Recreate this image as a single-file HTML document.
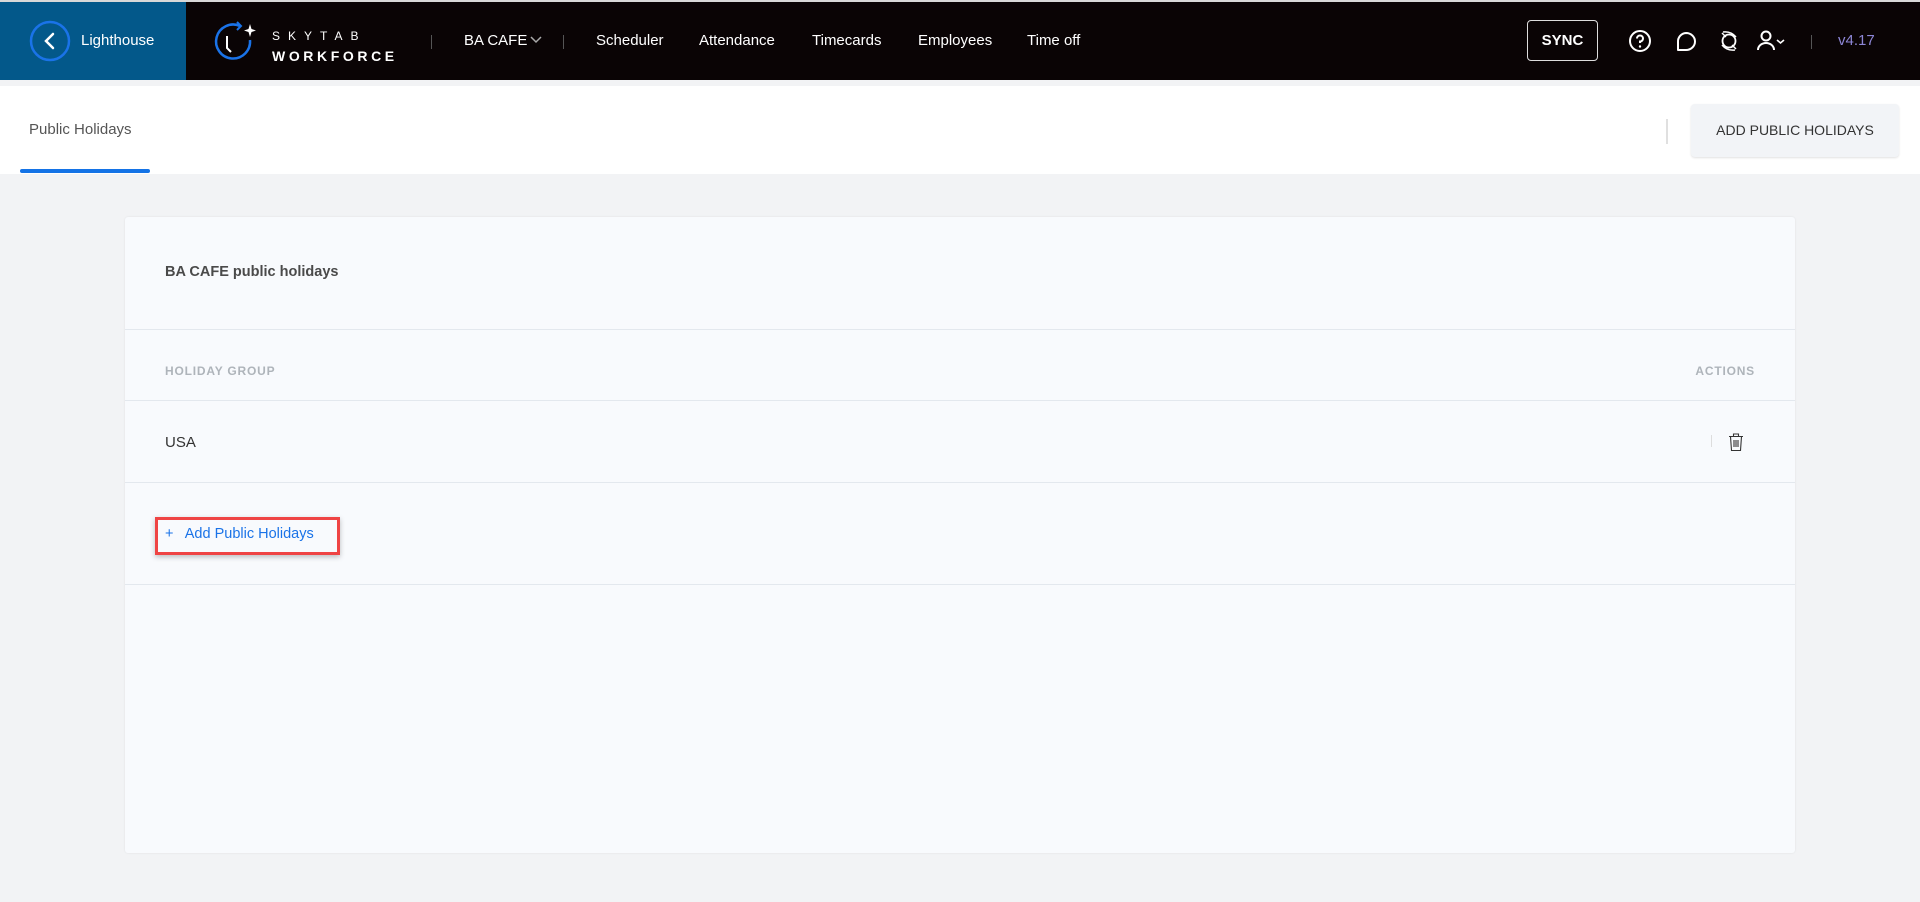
<!DOCTYPE html>
<html><head><meta charset="utf-8"><style>
*{box-sizing:border-box;margin:0;padding:0}
body{width:1920px;height:902px;background:#f2f3f5;font-family:"Liberation Sans",sans-serif;position:relative;overflow:hidden}
.hdr{position:absolute;left:0;top:0;width:1920px;height:80px;background:#0a0405;border-top:2px solid #d8d8d8}
.lh{position:absolute;left:0;top:0;width:186px;height:78px;background:#03588a}
.t{position:absolute;white-space:nowrap}
.nav{color:#fff;font-size:15px;top:30px}
.sep{position:absolute;width:1px;height:14px;background:#555;top:33px}
.sub{position:absolute;left:0;top:86px;width:1920px;height:88px;background:#fff}
.card{position:absolute;left:125px;top:217px;width:1670px;height:636px;background:#f8fafd;border-radius:3px;box-shadow:0 0 2px rgba(0,0,0,.08)}
.line{position:absolute;left:0;width:1670px;height:1px;background:#e3e8ee}
</style></head><body>
<div class="hdr">
 <div class="lh"></div>
 <svg style="position:absolute;left:29px;top:18px" width="42" height="42"><circle cx="21" cy="21" r="19" fill="none" stroke="#1a73e8" stroke-width="2.5"/><path d="M24 14 L17 21 L24 28" fill="none" stroke="#fff" stroke-width="2.5" stroke-linecap="round"/></svg>
 <div class="t nav" style="left:81px">Lighthouse</div>
 <svg style="position:absolute;left:210px;top:16px" width="50" height="50"><path d="M30 8 A17 17 0 1 0 40 22" fill="none" stroke="#1a73e8" stroke-width="2.5"/><path d="M27 4 L31 8 L27 12" fill="none" stroke="#1a73e8" stroke-width="2"/><path d="M17 18 V30 L21 34" fill="none" stroke="#fff" stroke-width="2"/><path d="M40 6 L41.5 11 L46 12.5 L41.5 14 L40 19 L38.5 14 L34 12.5 L38.5 11Z" fill="#fff"/></svg>
 <div class="t" style="left:272px;top:27px;color:#fff;font-size:12px;letter-spacing:8px">SKYTAB</div>
 <div class="t" style="left:272px;top:46px;color:#fff;font-size:14px;font-weight:bold;letter-spacing:3.6px">WORKFORCE</div>
 <div class="sep" style="left:431px"></div>
 <div class="t nav" style="left:464px">BA CAFE</div>
 <svg style="position:absolute;left:530px;top:34px" width="12" height="8"><path d="M1 1 L6 6 L11 1" fill="none" stroke="#aaa" stroke-width="1.5"/></svg>
 <div class="sep" style="left:563px"></div>
 <div class="t nav" style="left:596px">Scheduler</div>
 <div class="t nav" style="left:699px">Attendance</div>
 <div class="t nav" style="left:812px">Timecards</div>
 <div class="t nav" style="left:918px">Employees</div>
 <div class="t nav" style="left:1027px">Time off</div>
 <div style="position:absolute;left:1527px;top:18px;width:71px;height:41px;border:1px solid #ddd;border-radius:4px;color:#fff;font-size:15px;font-weight:bold;text-align:center;line-height:39px">SYNC</div>
 <svg style="position:absolute;left:1628px;top:27px" width="24" height="24"><circle cx="12" cy="12" r="10" fill="none" stroke="#fff" stroke-width="2"/><path d="M9 9.5 A3 3 0 1 1 12 12.5 V14" fill="none" stroke="#fff" stroke-width="2"/><circle cx="12" cy="17.5" r="1.2" fill="#fff"/></svg>
 <svg style="position:absolute;left:1674px;top:28px" width="24" height="24"><path d="M12 3 A9 8.5 0 0 1 21 11.5 A9 8.5 0 0 1 12 20 H4 V12 A8.5 8.5 0 0 1 12 3Z" fill="none" stroke="#fff" stroke-width="2" stroke-linejoin="round"/></svg>
 <svg style="position:absolute;left:1717px;top:27px" width="24" height="24"><circle cx="12" cy="12" r="6.5" fill="none" stroke="#fff" stroke-width="1.8"/><path d="M5 4 L9 8 M15 16 L19 20 M6 3 Q14 2 19 8 M5 16 Q10 22 18 21" fill="none" stroke="#fff" stroke-width="1.5"/></svg>
 <svg style="position:absolute;left:1756px;top:27px" width="36" height="24"><circle cx="10" cy="7" r="4.5" fill="none" stroke="#fff" stroke-width="2"/><path d="M2 21 A8 7 0 0 1 18 21" fill="none" stroke="#fff" stroke-width="2"/><path d="M21 11 L24.5 14 L28 11" fill="none" stroke="#fff" stroke-width="1.6"/></svg>
 <div class="sep" style="left:1811px"></div>
 <div class="t" style="left:1838px;top:30px;color:#8d86d6;font-size:15px">v4.17</div>
</div>
<div class="sub">
 <div class="t" style="left:29px;top:35px;color:#555;font-size:15px">Public Holidays</div>
 <div style="position:absolute;left:20px;top:83px;width:130px;height:4px;background:#1473e6;border-radius:2px"></div>
 <div style="position:absolute;left:1666px;top:33px;width:2px;height:25px;background:#e0e0e0"></div>
 <div style="position:absolute;left:1691px;top:18px;width:208px;height:53px;background:#f2f4f7;border-radius:4px;box-shadow:0 1px 2px rgba(0,0,0,.12);color:#333;font-size:14px;text-align:center;line-height:53px">ADD PUBLIC HOLIDAYS</div>
</div>
<div class="card">
 <div class="t" style="left:40px;top:47px;color:#4a4a4a;font-size:14.5px;font-weight:bold">BA CAFE public holidays</div>
 <div class="line" style="top:112px"></div>
 <div class="t" style="left:40px;top:147px;color:#aeb4ba;font-size:12px;font-weight:bold;letter-spacing:.8px">HOLIDAY GROUP</div>
 <div class="t" style="right:40px;top:147px;color:#aeb4ba;font-size:12px;font-weight:bold;letter-spacing:.8px">ACTIONS</div>
 <div class="line" style="top:183px"></div>
 <div class="t" style="left:40px;top:217px;color:#333;font-size:15px">USA</div>
 <div style="position:absolute;left:1586px;top:218px;width:1px;height:12px;background:#ddd"></div>
 <svg style="position:absolute;left:1602px;top:215px" width="18" height="20"><path d="M2 4.5 H16 M6.5 4.5 V2 H11.5 V4.5 M3.5 4.5 L4.5 18.5 H13.5 L14.5 4.5 M7 8 V15 M9 8 V15 M11 8 V15" fill="none" stroke="#333" stroke-width="1.1"/></svg>
 <div class="line" style="top:265px"></div>
 <div style="position:absolute;left:30px;top:300px;width:185px;height:38px;border:3px solid #ef4444;box-shadow:0 2px 5px rgba(0,0,0,.25)"></div>
 <div class="t" style="left:40px;top:309px;color:#1a73e8;font-size:14.5px">+&nbsp;&nbsp; Add Public Holidays</div>
 <div class="line" style="top:367px"></div>
</div>
</body></html>
